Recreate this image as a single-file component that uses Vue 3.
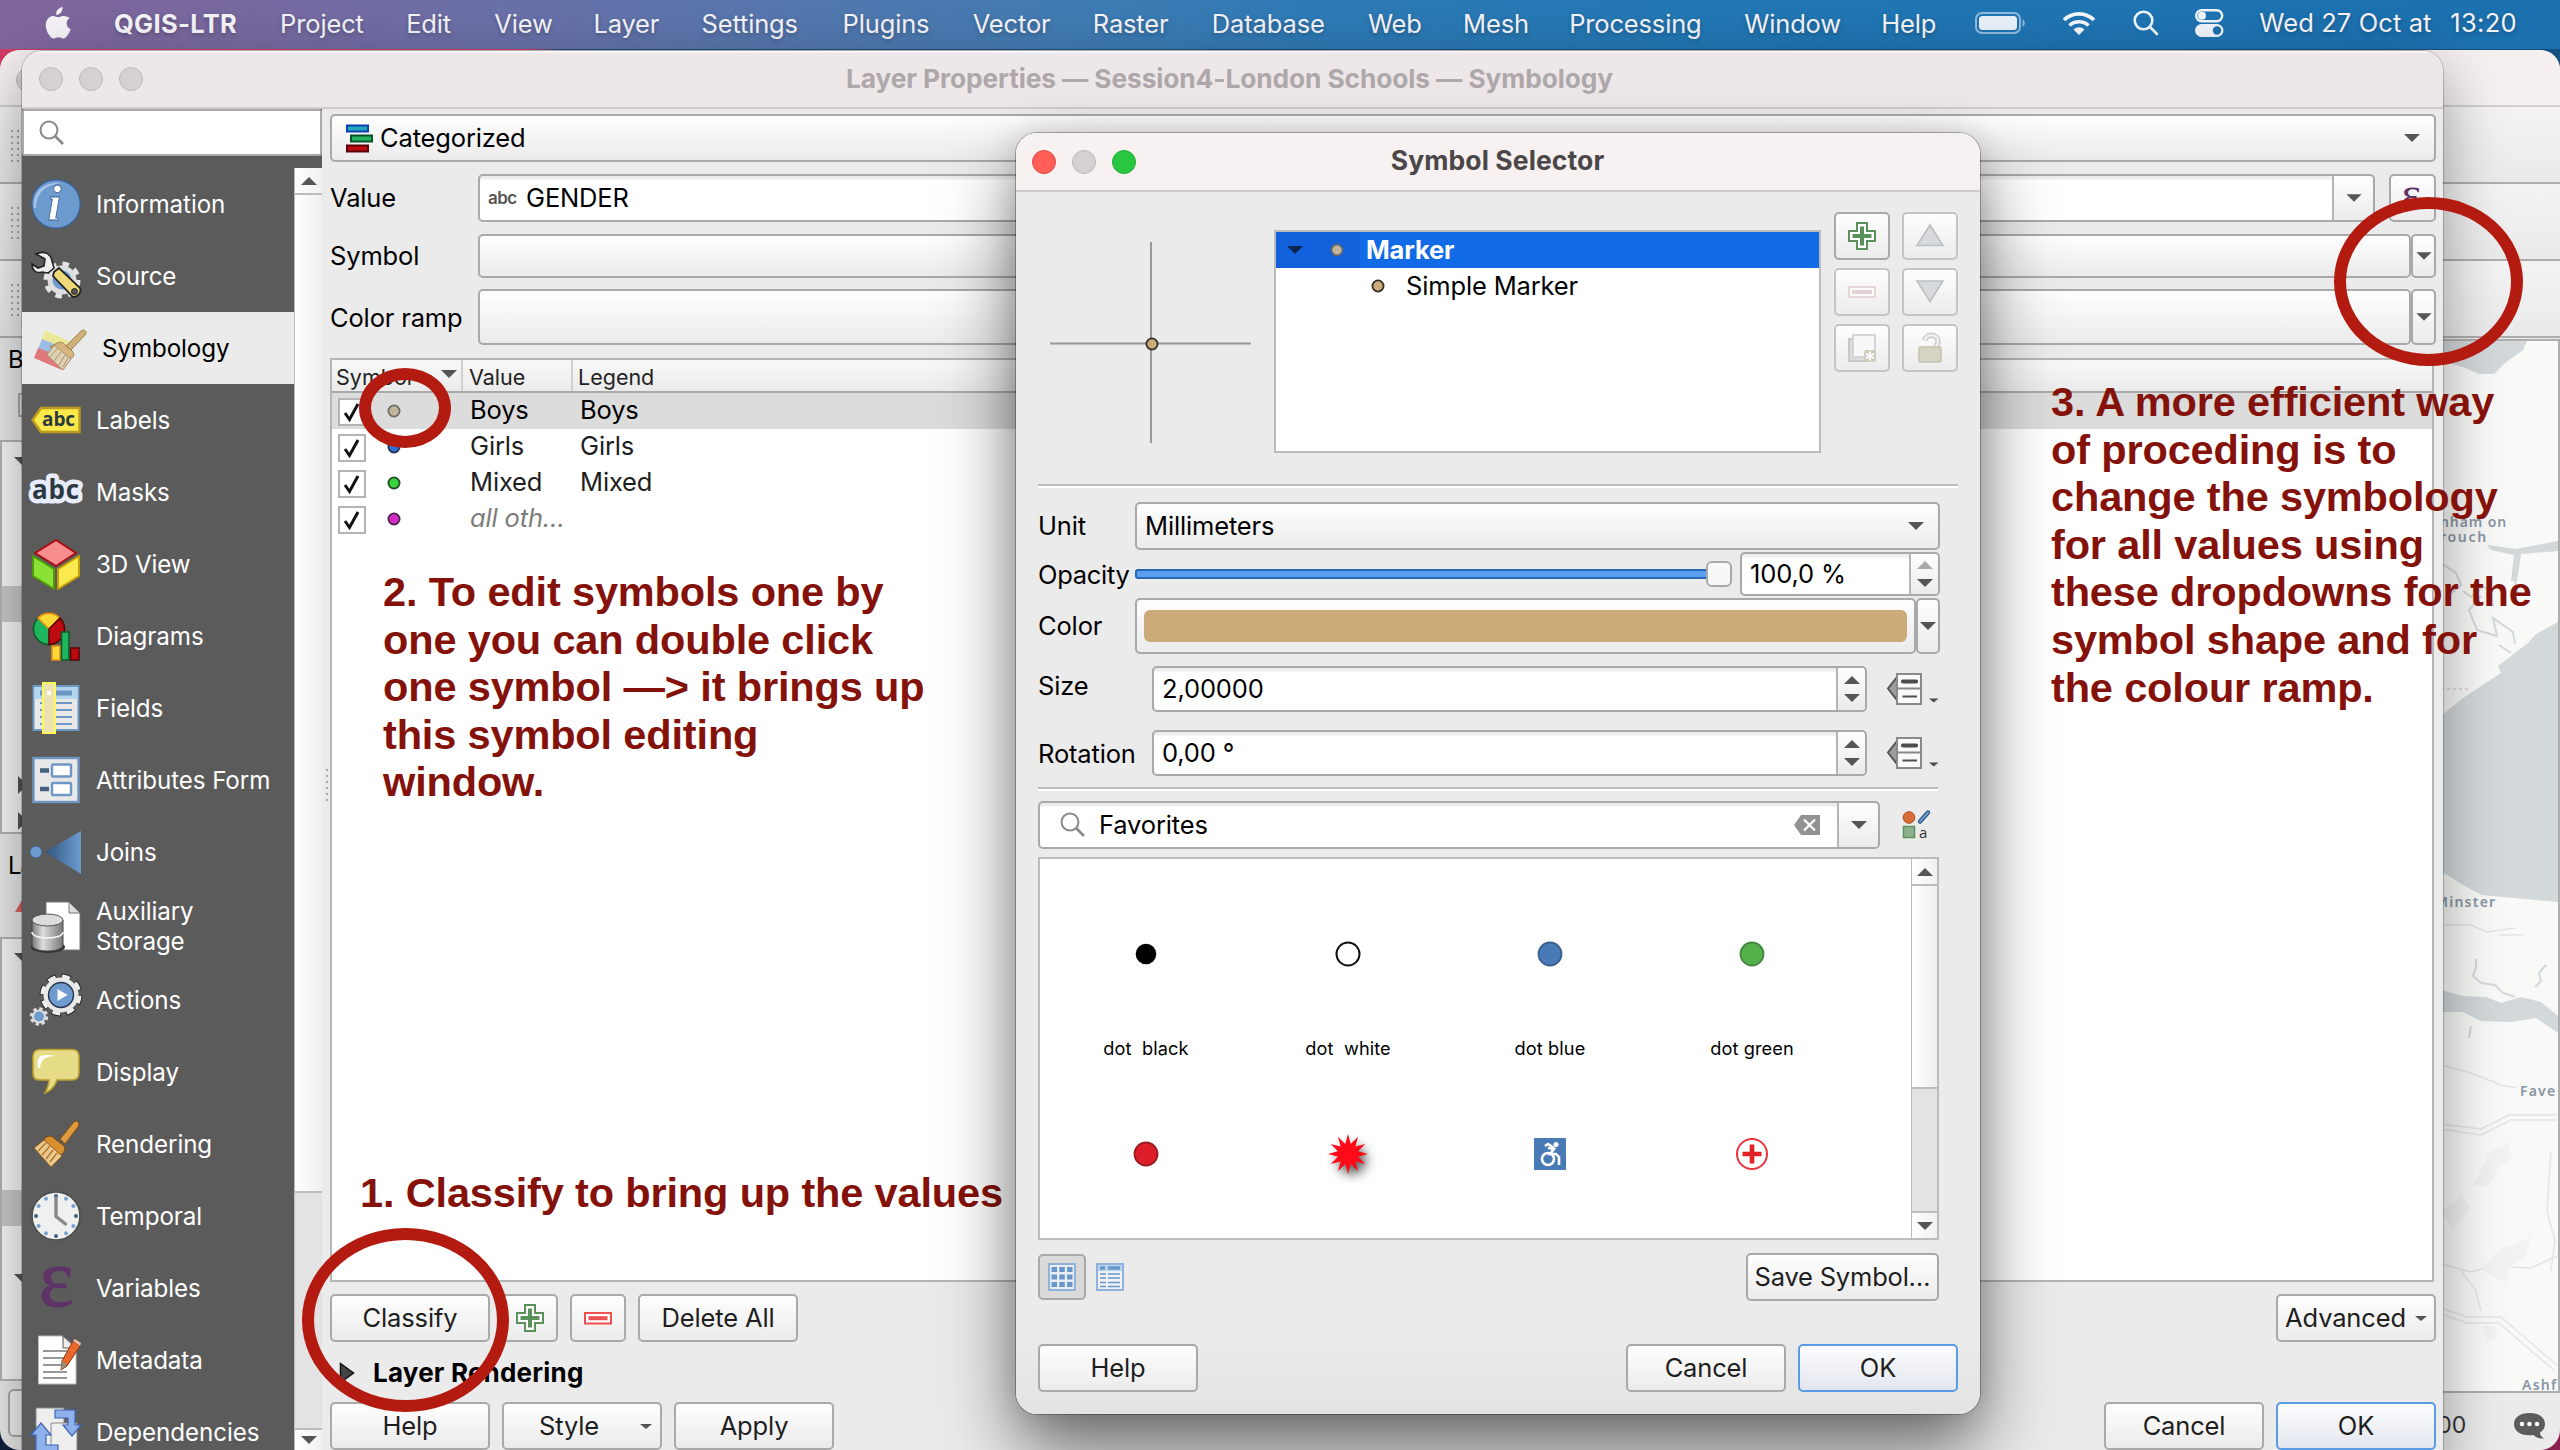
<script setup>
const menus = [
  { label: 'QGIS-LTR', w: 125, bold: true },
  { label: 'Project', w: 85 },
  { label: 'Edit', w: 47 },
  { label: 'View', w: 58 },
  { label: 'Layer', w: 67 },
  { label: 'Settings', w: 100 },
  { label: 'Plugins', w: 89 },
  { label: 'Vector', w: 79 },
  { label: 'Raster', w: 78 },
  { label: 'Database', w: 115 },
  { label: 'Web', w: 54 },
  { label: 'Mesh', w: 65 },
  { label: 'Processing', w: 134 },
  { label: 'Window', w: 96 },
  { label: 'Help', w: 56 },
]

const sections = [
  'Information', 'Source', 'Symbology', 'Labels', 'Masks', '3D View', 'Diagrams',
  'Fields', 'Attributes Form', 'Joins', 'Auxiliary Storage', 'Actions', 'Display',
  'Rendering', 'Temporal', 'Variables', 'Metadata', 'Dependencies',
]

const categories = [
  { value: 'Boys', legend: 'Boys', color: '#c2b59c', ring: '#6c6c66' },
  { value: 'Girls', legend: 'Girls', color: '#2e6fd8', ring: '#26344c' },
  { value: 'Mixed', legend: 'Mixed', color: '#35d43c', ring: '#264a28' },
  { value: 'all oth…', legend: '', color: '#d42ac6', ring: '#4a2448' },
]

const favorites = [
  { id: 'black', label: 'dot  black' },
  { id: 'white', label: 'dot  white' },
  { id: 'blue', label: 'dot blue' },
  { id: 'green', label: 'dot green' },
  { id: 'red' },
  { id: 'burst' },
  { id: 'access' },
  { id: 'cross' },
]

const starPoints = Array.from({ length: 24 }, (_, i) => {
  const r = i % 2 ? 10.5 : 20
  const a = (i * Math.PI) / 12 - Math.PI / 2
  return `${(30 + r * Math.cos(a)).toFixed(1)},${(30 + r * Math.sin(a)).toFixed(1)}`
}).join(' ')

const ticks = Array.from({ length: 12 }, (_, i) => {
  const a = (i * Math.PI) / 6
  return { x: 25 + 20 * Math.sin(a), y: 25 - 20 * Math.cos(a), main: i % 3 === 0 }
})
</script>

<template>
  <div class="desktop">
    <header class="menubar">
      <svg class="apple" width="27" height="32" viewBox="0 0 27 32"><path fill="#f4f2f7" d="M18.6 0c.3 2.4-.7 4.300-1.900 5.700-1.300 1.400-3 2.200-4.500 2-.3-2.200.7-4.100 1.900-5.400C15.300 1 17.200.1 18.600 0zM25.800 11.100c-2 1.200-3.200 3-3.100 5.400.1 2.800 1.700 4.800 4 5.800-.7 2.100-1.800 4.100-3.100 5.900-1.200 1.700-2.400 3.100-4.400 3.200-1.800 0-2.500-1.100-4.700-1.100s-2.900 1.100-4.700 1.100c-2 .1-3.400-1.700-4.700-3.500C2.400 24.100.4 17.800 2.900 13.200c1.300-2.600 3.700-4.100 6.200-4.200 2 0 3.700 1.300 5 1.300 1.200 0 3.300-1.600 5.800-1.300 2.300.1 4.400.9 5.900 2.100z"/></svg>
      <nav class="menus">
        <span v-for="m in menus" :key="m.label" :class="{ bold: m.bold }" :style="{ width: m.w + 'px' }">{{ m.label }}</span>
      </nav>
      <div class="status">
        <svg width="52" height="22" viewBox="0 0 52 22"><rect x="1" y="1" width="44" height="20" rx="6" fill="none" stroke="#8fbbdc" stroke-width="2"/><rect x="4" y="4" width="38" height="14" rx="3.500" fill="#e9f1f8"/><path d="M47.500 7.500c3 .8 3 6.200 0 7z" fill="#8fbbdc"/></svg>
        <svg class="wifi" width="34" height="25" viewBox="0 0 34 25"><g fill="none" stroke="#f1f6fa" stroke-width="3.600"><path d="M2 9a21.500 21.500 0 0 1 30 0"/><path d="M7.500 14.500a14 14 0 0 1 19 0"/></g><path fill="#f1f6fa" d="M11.500 18.500a8 8 0 0 1 11 0L17 24z"/></svg>
        <svg class="spot" width="26" height="26" viewBox="0 0 26 26"><g fill="none" stroke="#eef4fa" stroke-width="2.600" stroke-linecap="round"><circle cx="10.500" cy="10.500" r="8.800"/><path d="M17 17l7 7"/></g></svg>
        <svg class="cc" width="29" height="28" viewBox="0 0 29 28"><rect x="1.200" y="1.200" width="26" height="11" rx="5.500" fill="none" stroke="#eef4fa" stroke-width="2.400"/><circle cx="7" cy="6.700" r="4" fill="#eef4fa"/><rect y="15" width="28.500" height="13" rx="6.500" fill="#eef4fa"/><circle cx="22" cy="21.500" r="4.200" fill="#1d70ae"/></svg>
        <span class="date">Wed 27 Oct at</span><span class="time">13:20</span>
      </div>
    </header>

    <!-- QGIS main window -->
    <section class="main-window">
      <div class="mw-title"><i class="light off"></i></div>
      <div v-for="n in 3" :key="n" class="mw-tool"><i class="grip"></i></div>
      <div class="mw-body">
        <aside class="docks">
          <div class="dock-name">Browser</div>
          <i class="mini-box"></i>
          <div class="tree tree-a"><i class="dn"></i><i class="hl"></i><i class="rt"></i><i class="rt second"></i></div>
          <div class="dock-name layers">Layers</div>
          <i class="mini-tri"></i>
          <div class="tree tree-b"><i class="dn"></i><i class="hl"></i><i class="dn last"></i></div>
          <i class="dock-btn"></i>
        </aside>
        <svg class="map" width="119" height="1054" viewBox="0 0 117 1050">
          <rect width="117" height="1050" fill="#f9f9f7"/>
          <g fill="#d3d8db">
            <path d="M0 0H86L82 9 64 22 53 33H38L22 26 0 20z"/>
            <path d="M117 281L95 293 87 302 57 325 60 332 22 357 0 375V530L22 544 41 554 83 558 117 561z"/>
            <path d="M0 649L22 655 45 656 60 662 80 656 100 661 117 675V692L95 677 70 681 40 680 22 671 0 671z"/>
            <path d="M46 204L75 208 117 200V210L80 213 76 240H70L73 214 50 209z"/>
          </g>
          <g fill="none" stroke="#d3d8db" stroke-width="2">
            <path d="M35 618v8l-3 9 8 7 14 2 8 8 12 4M105 624l-7 8 2 8-6 6M30 685l-2 12M0 222l15 10 5 12-16 14M40 255l-12 14 8 20 20 6-4-18 20 14 2 12M22 250l8 6 12-10 8 2 2 18M74 240l3 14M58 304l12 8"/>
          </g>
          <g fill="none" stroke="#e4e5e3" stroke-width="1.500">
            <path d="M0 584h30l16 7 28-4M58 594h24M0 724l30 8 30 12 16 3M0 783l40 5 28-14h48M0 788l40 6 30-15h46M0 923l30 8 20-6 40 2 26-12M0 967l26 9h34l30 26 26 22M0 973l26 9h32l30 26 26 22M20 930l14 18 6 22M110 810l-4 60 8 30-4 30"/>
          </g>
          <path d="M0 348h28" stroke="#ead9de" stroke-width="2" stroke-dasharray="3 3"/>
          <g fill="#f1f3f0">
            <path d="M48 812l18-10 6 14-14 10-10 20-16-2zM60 908l30-12-6 20-14 8-6 18-24-14zM0 870l20-14 10 10-18 22zM42 985h12l2 10-10 6z"/>
          </g>
          <g fill="#8996a4" font-family="'Noto Sans', sans-serif" font-weight="600" font-size="14">
            <text x="-1" y="186" textLength="66">nham on</text><text x="-1" y="201" textLength="46">rouch</text>
            <text x="-4" y="535">s</text><text x="-6" y="566" textLength="60">Minster</text>
            <text x="79" y="755" textLength="35">Fave</text><text x="81" y="1049" textLength="34">Ashf</text>
          </g>
        </svg>
      </div>
      <footer class="mw-status"><span>00</span>
        <svg width="34" height="30" viewBox="0 0 34 30"><path fill="#5c5c5c" d="M16.500 2C26 2 32 6.500 32 13c0 4-2 6.600-5 8.500 0 2.500 1.500 4.500 4 6-4.500.3-8-1-10.500-3.600C9 25.500 1 21 1 13 1 6.500 7 2 16.500 2z"/><g fill="#fff"><circle cx="9" cy="13" r="2.300"/><circle cx="16.500" cy="13" r="2.300"/><circle cx="24" cy="13" r="2.300"/></g></svg>
      </footer>
    </section>

    <!-- Layer properties -->
    <section class="props">
      <div class="titlebar">
        <div class="lights"><i class="light off"></i><i class="light off"></i><i class="light off"></i></div>
        <h1>Layer Properties — Session4-London Schools — Symbology</h1>
      </div>
      <div class="props-body">
        <aside class="side">
          <div class="search"><svg width="26" height="26" viewBox="0 0 26 26"><g fill="none" stroke="#8a8a8a" stroke-width="2"><circle cx="10" cy="10" r="8.500"/><path d="M16 16l8 8" stroke-width="2.600"/></g></svg></div>
          <div class="side-main">
            <ul class="sections">
              <li v-for="s in sections" :key="s" :class="{ active: s === 'Symbology', tall: s === 'Auxiliary Storage' }">
                <svg class="ico" width="50" height="50" viewBox="0 0 50 50">
                  <g v-if="s === 'Information'">
                    <circle cx="25" cy="25" r="24.300" fill="#6d9bce" stroke="#3d5f96" stroke-width="1.400"/>
                    <path d="M3 29C1 12 14 2 31 4 14 6 6 13 5 29z" fill="#a5c3e6"/>
                    <text x="16.500" y="41" font-family="Liberation Serif, serif" font-weight="bold" font-style="italic" font-size="50" fill="#fff" stroke="#40609a" stroke-width=".8">i</text>
                  </g>
                  <g v-else-if="s === 'Source'">
                    <circle cx="31" cy="29" r="15.500" fill="none" stroke="#e4e4e4" stroke-width="6" stroke-dasharray="6.200 5.970"/>
                    <circle cx="31" cy="29" r="12" fill="#6d9bce" stroke="#dedede" stroke-width="5"/>
                    <path d="M23 21l5-4L49 37c2 4-2 9-7 9L22 25z" fill="#f0d979" stroke="#222" stroke-width="1.800"/>
                    <circle cx="43.500" cy="40.500" r="3" fill="#555" stroke="#222"/>
                    <path d="M5 3C13-1 20 3 21 10l2 7-6 5-6-1C5 23 1 19 1 13l6 4 6-2 1-7z" fill="#eef0ee" stroke="#222" stroke-width="1.600"/>
                  </g>
                  <g v-else-if="s === 'Symbology'" opacity=".85">
                    <path d="M10 7L38 20 34 30 6 18z" fill="#ebe88b"/><path d="M7 16L36 28 32 37 3 26z" fill="#8db4e4"/><path d="M3 25L32 36 27 47-1 35z" fill="#e0646c"/>
                    <path d="M46 8c3-3 7 1 4 4L36 27l-5-4z" fill="#cda867" stroke="#8f713c"/>
                    <path d="M22 20c4-2 7 0 9 3l5 4c4 3 3 6 1 8l-4 1-18-12z" fill="#d3ad6b" stroke="#8f713c"/>
                    <path d="M19 22l17 14-8 11-16-15z" fill="#dccdab" stroke="#9a8255"/><path d="M22 26l-7 8M26 29l-7 9M30 32l-6 10M33 35l-5 9" stroke="#9a8255"/>
                  </g>
                  <g v-else-if="s === 'Labels'">
                    <path d="M1.500 25L10 13H48.500V37H10z" fill="#fbe84a" stroke="#bd9b1c" stroke-width="2.400"/>
                    <text x="11" y="31" textLength="33" font-family="Open Sans, sans-serif" font-weight="bold" font-size="19" fill="#2b3a40">abc</text>
                  </g>
                  <g v-else-if="s === 'Masks'">
                    <text x="1" y="32" textLength="47" font-family="Open Sans, sans-serif" font-weight="bold" font-size="26" fill="#e9ecfb" stroke="#e9ecfb" stroke-width="9" stroke-linejoin="round">abc</text>
                    <text x="1" y="32" textLength="47" font-family="Open Sans, sans-serif" font-weight="bold" font-size="26" fill="#2b3a40">abc</text>
                  </g>
                  <g v-else-if="s === '3D View'" stroke-width="2" stroke-linejoin="round">
                    <path d="M25 1L45 14 25 27 4 14z" fill="#f78d8d" stroke="#ac0c10"/>
                    <path d="M2 17L23 30V50L2 37z" fill="#8ae234" stroke="#4f9a06"/><path d="M48 17L27 30V50L48 37z" fill="#fce94f" stroke="#c4a000"/>
                  </g>
                  <g v-else-if="s === 'Diagrams'" stroke-width="1.600">
                    <circle cx="18" cy="18" r="15.500" fill="#1fb55c" stroke="#0c5a2c"/><path d="M18 18L7 7a15.500 15.500 0 0 1 22 0z" fill="#ffd93a" stroke="#e8930c"/><path d="M18 18L29 7a15.500 15.500 0 0 1-11 26.500z" fill="#bd0a10" stroke="#5c0508"/>
                    <path d="M21 35h8v14h-8z" fill="#ffd93a" stroke="#e8930c"/><path d="M39.500 37H48v12h-8.500z" fill="#bd0a10" stroke="#5c0508"/><path d="M30.500 21H38v28h-7.500z" fill="#1fb55c" stroke="#0c5a2c"/>
                  </g>
                  <g v-else-if="s === 'Fields'">
                    <rect x="2.500" y="3" width="45" height="44" fill="#e8e8e8" stroke="#6d97c4" stroke-width="2"/><path d="M3.500 4h43v12h-43z" fill="#b5d5ee"/><path d="M9 10h32" stroke="#6d97c4" stroke-width="5"/><path d="M9 20h32M9 27h32M9 34h32M9 41h32" stroke="#6d97c4" stroke-width="2"/>
                    <rect x="12" y="0" width="12" height="50" fill="#ece3b0" stroke="#fdf859" stroke-width="2"/><path d="M16 8h4v4h-4z" fill="#fff"/>
                  </g>
                  <g v-else-if="s === 'Attributes Form'">
                    <rect x="2.500" y="3" width="45" height="44" fill="#e8e8e8" stroke="#6d97c4" stroke-width="2.400"/><path d="M9 15.500h9M9 34h9" stroke="#46607f" stroke-width="4.600"/><g fill="#fff" stroke="#6d97c4" stroke-width="2.400"><rect x="21" y="9.500" width="19" height="12" rx="1"/><rect x="21" y="28" width="19" height="12" rx="1"/></g>
                  </g>
                  <g v-else-if="s === 'Joins'">
                    <defs><linearGradient id="jg"><stop offset="0" stop-color="#2f5580"/><stop offset="1" stop-color="#6d9bce"/></linearGradient></defs>
                    <circle cx="5" cy="25" r="5.800" fill="#6d9bce" stroke="#466d9c"/><path d="M14 25L50 4V47z" fill="url(#jg)"/>
                  </g>
                  <g v-else-if="s === 'Auxiliary Storage'">
                    <defs><linearGradient id="cy"><stop offset="0" stop-color="#777"/><stop offset=".35" stop-color="#ddd"/><stop offset="1" stop-color="#777"/></linearGradient></defs>
                    <path d="M15 1H38L49 12V49H15z" fill="#fff" stroke="#777"/><path d="M38 1v11h11z" fill="#ddd" stroke="#777"/>
                    <ellipse cx="17" cy="46" rx="17" ry="6" fill="#333"/><path d="M1 19V44c0 8 31 8 31 0V19z" fill="url(#cy)" stroke="#444"/><ellipse cx="16.500" cy="19" rx="15.500" ry="6" fill="#dcdcdc" stroke="#555"/><path d="M1 31c0 8 31 8 31 0" fill="none" stroke="#f2f2f2" stroke-width="1.600"/>
                  </g>
                  <g v-else-if="s === 'Actions'">
                    <circle cx="30" cy="20" r="17" fill="none" stroke="#222" stroke-width="9" stroke-dasharray="8.400 4.950"/>
                    <circle cx="30" cy="20" r="17" fill="none" stroke="#eee" stroke-width="7" stroke-dasharray="7.200 6.150" stroke-dashoffset="-.6"/>
                    <circle cx="30" cy="20" r="15" fill="#6d9bce" stroke="#e8e8e8" stroke-width="5"/><circle cx="30" cy="20" r="12.500" fill="none" stroke="#25344a" stroke-width="1.400"/><path d="M26.500 14v12l10-6z" fill="#fff"/>
                    <circle cx="8" cy="41.500" r="7.500" fill="none" stroke="#ddd" stroke-width="3.500" stroke-dasharray="3.300 2.590"/><circle cx="8" cy="41.500" r="6" fill="#6d9bce" stroke="#ddd" stroke-width="2"/>
                  </g>
                  <g v-else-if="s === 'Display'">
                    <path d="M9 2.500H41c5 0 7 3 7 7V26c0 5-2 7-7 7H26c-2 6-7 11-12 13 2-4 4-9 4-13H9c-5 0-7-2-7-7V9.500c0-4 2-7 7-7z" fill="#e6dc87" stroke="#b99e2a" stroke-width="1.600"/><path d="M7 21C5 9 9 6 25 9 13 9 10 13 9 21z" fill="#fff"/>
                  </g>
                  <g v-else-if="s === 'Rendering'">
                    <path d="M42 4c3-4 8 0 5 4L34 25l-5-5z" fill="#de9a3c" stroke="#7c4d10"/><path d="M14 19c4-3 8-2 11 2l7 5c3 3 2 5 0 8l-4 4-16-15z" fill="#d98f2f" stroke="#7c4d10"/>
                    <path d="M13 21L31 37 20 48 3 29z" fill="#eec98c" stroke="#8a5a1a"/><path d="M15 24L7 32M19 27l-8 9M22 31l-7 9M26 34l-7 9" stroke="#a87430" stroke-width="1.300"/>
                  </g>
                  <g v-else-if="s === 'Temporal'">
                    <circle cx="25" cy="25" r="24" fill="#f0f0ee" stroke="#4c4c4c" stroke-width="1.600"/><circle v-for="(t, i) in ticks" :key="i" :cx="t.x" :cy="t.y" r="2" :fill="t.main ? '#46607f' : '#76a2d2'"/><path d="M25 7V25.500L34.500 33" fill="none" stroke="#888a85" stroke-width="3.400" stroke-linecap="round"/>
                  </g>
                  <g v-else-if="s === 'Variables'">
                    <text x="8" y="43" font-family="Liberation Serif, serif" font-size="82" fill="#5f3268" stroke="#5f3268">ε</text>
                  </g>
                  <g v-else-if="s === 'Metadata'">
                    <path d="M7.500 1H32L45 13V49H7.500z" fill="#fff" stroke="#bbb"/><path d="M32 1v12h13z" fill="#eee" stroke="#555"/><path d="M12 16H36M12 23H36M12 30H30M12 37H36M12 43H36" stroke="#777" stroke-width="1.400"/>
                    <path d="M42 6l7 5L36 31l-6 4 1-9z" fill="#e9692c" stroke="#8a3a10"/><path d="M30 35l1-9 5 4z" fill="#8f8f85"/><path d="M42 6l7 5 1-3-6-4z" fill="#e9b9a8"/>
                  </g>
                  <g v-else>
                    <path d="M5 1H33V50H5z" fill="#eee" stroke="#888"/><path d="M20 16H46V50H20z" fill="#eee" stroke="#888"/><path d="M24 3H44V18H50L41 29 32 18H37V11H24z" fill="#8fb2ec" stroke="#3d67b8" stroke-width="1.200"/><path d="M10 16L20 28H15V38H27V48H5V28H0z" fill="#8fb2ec" stroke="#3d67b8" stroke-width="1.200"/>
                  </g>
                </svg>
                <span>{{ s }}</span>
              </li>
            </ul>
            <div class="side-scroll"><div class="sb-btn"><i class="up"></i></div><div class="sb-track"></div><div class="sb-handle"></div><div class="sb-btn end"><i class="down"></i></div></div>
          </div>
        </aside>

        <div class="panel">
          <div class="combo renderer">
            <svg width="27" height="29" viewBox="0 0 27 29" stroke-width="2"><path d="M1 1.500h21v6H1z" fill="#1ea8b8" stroke="#0c3fb4"/><path d="M5 11.500h21v6H5z" fill="#22b45c" stroke="#0a5028"/><path d="M1 21.500h21v6H1z" fill="#bd0a10" stroke="#5c0508"/></svg>
            <span>Categorized</span><i class="down"></i>
          </div>
          <div class="row r-value"><label>Value</label>
            <div class="edit"><small>abc</small><span>GENDER</span><b class="drop"><i class="down"></i></b></div>
            <div class="btn eps">ε</div>
          </div>
          <div class="row r-symbol"><label>Symbol</label><div class="btn wide"></div><div class="btn arrow"><i class="down"></i></div></div>
          <div class="row r-ramp"><label>Color ramp</label><div class="btn wide"></div><div class="btn arrow"><i class="down"></i></div></div>
          <div class="table">
            <div class="thead"><span class="c1">Symbol<i class="down"></i></span><span class="c2">Value</span><span class="c3">Legend</span></div>
            <div v-for="(c, i) in categories" :key="c.value" class="trow" :class="{ sel: i === 0, other: i === 3 }">
              <svg class="check" width="28" height="28" viewBox="0 0 28 28"><rect x="1" y="1" width="26" height="26" fill="#fff" stroke="#b4b4b4" stroke-width="2"/><path d="M7 15l4.500 6.500L20 6" fill="none" stroke="#111" stroke-width="3"/></svg>
              <svg class="dot" width="16" height="16" viewBox="0 0 16 16"><circle cx="8" cy="8" r="5.600" :fill="c.color" :stroke="c.ring" stroke-width="1.800"/></svg>
              <span class="v">{{ c.value }}</span><span>{{ c.legend }}</span>
            </div>
          </div>
          <div class="actions">
            <div class="btn b160">Classify</div>
            <div class="btn sq add"><svg width="28" height="28" viewBox="0 0 28 28"><path d="M9 1h10v8h8v10h-8v8H9v-8H1V9h8z" fill="#fff" stroke="#5a905a" stroke-width="2"/><path d="M14 4.500v19M4.500 14h19" stroke="#5a905a" stroke-width="4"/></svg></div>
            <div class="btn sq rem"><svg width="28" height="28" viewBox="0 0 28 28"><path d="M1 9h26v10.500H1z" fill="#fff" stroke="#ee4f4f" stroke-width="2"/><path d="M4.500 14.200h19" stroke="#ee4f4f" stroke-width="4"/></svg></div>
            <div class="btn b160">Delete All</div>
            <div class="btn b160 adv">Advanced<i class="down s"></i></div>
          </div>
          <div class="rendering"><svg width="16" height="22" viewBox="0 0 16 22"><path d="M1.500 1.500L14.500 11 1.500 20.500z" fill="#444" stroke="#111" stroke-width="1.500"/></svg>Layer Rendering</div>
          <div class="footer">
            <div class="btn b160">Help</div><div class="btn b160 style">Style<i class="down s"></i></div><div class="btn b160">Apply</div>
            <div class="btn b160 push">Cancel</div><div class="btn b160 primary">OK</div>
          </div>
        </div>
      </div>
    </section>
    <i class="splitter"></i>

    <p class="note n1">1. Classify to bring up the values</p>

    <!-- Symbol selector -->
    <section class="selector">
      <div class="titlebar">
        <div class="lights"><i class="light red"></i><i class="light off"></i><i class="light green"></i></div>
        <h1>Symbol Selector</h1>
      </div>
      <div class="sel-body">
        <div class="top">
          <svg class="preview" width="202" height="202" viewBox="0 0 202 202"><path d="M101 0V201" stroke="#98989d" stroke-width="2"/><path d="M0 101.500H201" stroke="#98989d" stroke-width="2"/><circle cx="102" cy="102" r="5.600" fill="#cdab78" stroke="#33302c" stroke-width="1.800"/></svg>
          <div class="symtree">
            <div class="node on"><i class="down"></i><svg width="16" height="16" viewBox="0 0 16 16"><circle cx="8" cy="8" r="5.500" fill="#c2b59c" stroke="#60676e" stroke-width="1.800"/></svg><span>Marker</span></div>
            <div class="node leaf"><svg width="16" height="16" viewBox="0 0 16 16"><circle cx="8" cy="8" r="5.600" fill="#cdab78" stroke="#33302c" stroke-width="1.800"/></svg><span>Simple Marker</span></div>
          </div>
          <div class="symbtns">
            <div class="btn"><svg width="28" height="28" viewBox="0 0 28 28"><path d="M9 1h10v8h8v10h-8v8H9v-8H1V9h8z" fill="#fff" stroke="#5a905a" stroke-width="2"/><path d="M14 4.500v19M4.500 14h19" stroke="#5a905a" stroke-width="4"/></svg></div>
            <div class="btn dis"><svg width="28" height="28" viewBox="0 0 28 28"><path d="M14 3L27 23.500H1z" fill="#d6dadd" stroke="#bcc0c3" stroke-width="1.600"/></svg></div>
            <div class="btn dis"><svg width="28" height="28" viewBox="0 0 28 28"><path d="M1 9h26v10H1z" fill="#fdfafa" stroke="#e2d6d6" stroke-width="2"/><path d="M4 14h20" stroke="#e0d3d3" stroke-width="4"/></svg></div>
            <div class="btn dis"><svg width="28" height="28" viewBox="0 0 28 28"><path d="M14 23.500L27 3H1z" fill="#d6dadd" stroke="#bcc0c3" stroke-width="1.600"/></svg></div>
            <div class="btn dis"><svg width="28" height="28" viewBox="0 0 28 28"><path d="M1 5h22v22H1z" fill="#dcdcdc" stroke="#c8c8c8" stroke-width="2"/><path d="M5 1h22v22H5z" fill="#f8f8f8" stroke="#d4d4d4" stroke-width="2"/><rect x="16" y="16" width="12" height="12" rx="2.500" fill="#cfccc0"/><path d="M22 17.500v9M18 19.700l8 4.600M26 19.700l-8 4.600" stroke="#fff" stroke-width="1.700"/></svg></div>
            <div class="btn dis"><svg width="28" height="32" viewBox="0 0 28 32"><path d="M8.500 8.500C10 2 21 1 22 9c.2 3-1 4-2 6" fill="none" stroke="#cacaca" stroke-width="5.500"/><path d="M8.500 8.500C10 2 21 1 22 9c.2 3-1 4-2 6" fill="none" stroke="#f0f0f0" stroke-width="2.500"/><rect x="3" y="15" width="22" height="15" rx="2" fill="#d6d3c4" stroke="#c6c2b0" stroke-width="1.600"/></svg></div>
          </div>
        </div>
        <hr class="hr1">
        <div class="srow s-unit"><label>Unit</label><div class="combo"><span>Millimeters</span><i class="down"></i></div></div>
        <div class="srow s-op"><label>Opacity</label><div class="slider"><i class="rail"></i><i class="knob"></i></div>
          <div class="spin"><span>100,0 %</span><b><i class="up dim"></i><i class="down"></i></b></div></div>
        <div class="srow s-col"><label>Color</label><div class="btn color"><i></i></div><div class="btn arrow"><i class="down"></i></div></div>
        <div v-for="f in [['Size', '2,00000'], ['Rotation', '0,00 °']]" :key="f[0]" class="srow s-num" :class="f[0].toLowerCase()">
          <label>{{ f[0] }}</label><div class="spin"><span>{{ f[1] }}</span><b><i class="up"></i><i class="down"></i></b></div>
          <svg class="dd" width="54" height="32" viewBox="0 0 54 32"><path d="M11 4L2 15.500 11 27z" fill="#9b9da1" stroke="#555" stroke-width="2"/><rect x="11" y="1" width="24" height="30" fill="#fafafa" stroke="#888a85" stroke-width="2"/><path d="M11 15.500h24" stroke="#888a85" stroke-width="2"/><path d="M17 8.500h13" stroke="#4d4d4d" stroke-width="4.200" stroke-linecap="round"/><path d="M16.500 23.500H31" stroke="#4d4d4d" stroke-width="2"/><path d="M43 25.500h9.500l-4.700 4z" fill="#4d4d4d"/></svg>
        </div>
        <hr class="hr2">
        <div class="fav">
          <div class="edit"><svg width="26" height="26" viewBox="0 0 26 26"><g fill="none" stroke="#8a8a8a" stroke-width="2"><circle cx="10" cy="10" r="8.500"/><path d="M16 16l8 8" stroke-width="2.600"/></g></svg><span>Favorites</span>
            <svg class="clr" width="26" height="20" viewBox="0 0 26 20"><path d="M7 0H26V20H7L0 10z" fill="#929292"/><path d="M10 4.500l11 11M21 4.500l-11 11" stroke="#fff" stroke-width="2.200"/></svg>
            <b class="drop"><i class="down"></i></b></div>
          <svg width="28" height="28" viewBox="0 0 28 28"><circle cx="7" cy="6.500" r="5.800" fill="#d96c34" stroke="#a34a1a"/><path d="M18 10.500l8-9" stroke="#2e5586" stroke-width="4.400" stroke-linecap="round"/><path d="M18 10.500l8-9" stroke="#6d9bce" stroke-width="2" stroke-linecap="round"/><rect x="1.500" y="15.500" width="11" height="11" fill="#8fb08c" stroke="#5a905a" stroke-width="1.500"/><text x="17" y="26.500" font-family="Open Sans, sans-serif" font-size="15" fill="#333">a</text></svg>
        </div>
        <div class="gallery">
          <div class="cells">
            <figure v-for="f in favorites" :key="f.id">
              <svg width="60" height="60" viewBox="0 0 60 60">
                <circle v-if="f.id === 'black'" cx="30" cy="30" r="10.300" fill="#000"/>
                <circle v-else-if="f.id === 'white'" cx="30" cy="30" r="11.500" fill="#fff" stroke="#111" stroke-width="2"/>
                <circle v-else-if="f.id === 'blue'" cx="30" cy="30" r="11.500" fill="#487bb6" stroke="#38608f" stroke-width="1.800"/>
                <circle v-else-if="f.id === 'green'" cx="30" cy="30" r="11.500" fill="#54b04a" stroke="#42883a" stroke-width="1.800"/>
                <circle v-else-if="f.id === 'red'" cx="30" cy="30" r="11.500" fill="#db1e2a" stroke="#9a1a20" stroke-width="1.800"/>
                <g v-else-if="f.id === 'burst'" class="burst"><polygon :points="starPoints" fill="#ff0a18"/></g>
                <g v-else-if="f.id === 'access'"><rect x="14" y="14" width="32" height="32" fill="#487bb6"/><g fill="none" stroke="#fff" stroke-width="2.600"><path d="M28 24l6 1-4 5h6l3 3v8"/><path d="M25 22l3-2 6 4"/><circle cx="28" cy="35" r="6"/></g><circle cx="36" cy="20.500" r="2.500" fill="#fff"/></g>
                <g v-else><circle cx="30" cy="30" r="15" fill="#fff" stroke="#e8343c" stroke-width="2"/><path d="M30 20.500v19M20.500 30h19" stroke="#e31f28" stroke-width="4.600"/></g>
              </svg>
              <figcaption>{{ f.label }}</figcaption>
            </figure>
          </div>
          <div class="gal-scroll"><div class="sb-btn"><i class="up"></i></div><div class="sb-track"></div><div class="sb-handle"></div><div class="sb-btn end"><i class="down"></i></div></div>
        </div>
        <div class="views">
          <div class="btn pressed"><svg width="28" height="28" viewBox="0 0 28 28"><rect x="1" y="1" width="26" height="26" fill="#e8eef4" stroke="#8fb3d8" stroke-width="2"/><path d="M3.500 6.500h21M3.500 14h21M3.500 21.500h21" stroke="#6796c8" stroke-width="5" stroke-dasharray="5.500 2.300"/></svg></div>
          <svg width="28" height="28" viewBox="0 0 28 28"><rect x="1" y="1" width="26" height="26" fill="#eef2f6" stroke="#8fb3d8" stroke-width="2"/><path d="M2 2h24v6H2z" fill="#b5d5ee"/><path d="M4 5h5M12 5h12" stroke="#6796c8" stroke-width="3.500"/><path d="M4 11h6M12 11h12M4 15h6M12 15h12M4 19.500h6M12 19.500h12M4 23.500h6M12 23.500h12" stroke="#6796c8" stroke-width="1.600"/></svg>
          <div class="btn save">Save Symbol…</div>
        </div>
        <div class="sel-foot"><div class="btn b160">Help</div><div class="btn b160 push">Cancel</div><div class="btn b160 primary">OK</div></div>
      </div>
    </section>

    <p class="note n2">2. To edit symbols one by<br>one you can double click<br>one symbol —&gt; it brings up<br>this symbol editing<br>window.</p>
    <p class="note n3">3. A more efficient way<br>of proceding is to<br>change the symbology<br>for all values using<br>these dropdowns for the<br>symbol shape and for<br>the colour ramp.</p>
    <i class="ring ra"></i><i class="ring rb"></i><i class="ring rc"></i>
  </div>
</template>

<style>
body { margin: 0; overflow: hidden; }
</style>

<style scoped>
* { box-sizing: border-box; }
.desktop {
  position: relative; width: 2560px; height: 1450px; overflow: hidden;
  font: 25.500px/1.2 Inter, sans-serif; letter-spacing: -0.150px; color: #000;
  background: linear-gradient(90deg, #d03a63 0 530px, #14517f 560px) top/100% 120px no-repeat, linear-gradient(90deg, #12203f 50%, #8a1f4f);
}
svg { display: block; flex: none; overflow: visible; }
i { display: block; flex: none; }
.menubar {
  height: 49px; display: flex; align-items: center; padding-left: 44px; color: #f4f3f8; white-space: nowrap;
  background: linear-gradient(90deg, #80669b 0, #7769a0 250px, #6a70a8 500px, #5577ae 780px, #447bb2 1020px, #2f7ab5 1300px, #2277b4 1700px, #1b70af 2560px);
  text-shadow: 0 2px 4px rgba(0,0,0,.25);
}
.apple { margin-top: -4px; }
.menus { display: flex; gap: 41.100px; margin: -1px 0 0 43px; }
.menus span { flex: none; }
.menus .bold { font-weight: 700; letter-spacing: .3px; }
.status { display: flex; align-items: center; margin-left: 38px; }
.status svg { margin-top: -3px; }
.status svg:first-child { margin-top: -4px; }
.wifi { margin-left: 35px; }
.spot { margin-left: 37px; }
.cc { margin-left: 36px; }
.date { margin-left: 35px; width: 175px; letter-spacing: .1px; margin-top: -2px; }
.time { margin-left: 16px; letter-spacing: .3px; margin-top: -2px; }

.up, .down { width: 0; height: 0; border: 8px solid transparent; border-top: 8px solid #555; border-bottom: 0; }
.up { border-top: 0; border-bottom: 8px solid #555; }
.up.dim { border-bottom-color: #aaa; }
.down.s { border-width: 5.500px 6px 0; }

.main-window { position: absolute; left: 0; top: 50px; width: 2560px; height: 1400px; background: #ebebeb; border-radius: 20px; overflow: hidden; display: flex; flex-direction: column; }
.mw-title { height: 57px; background: #f5eff2; border-bottom: 2px solid #d3cdcf; padding: 18px 0 0 16px; flex: none; }
.mw-tool { height: 77px; border-bottom: 2px solid #aeaeae; background: linear-gradient(#f3f3f3, #eaeaea); padding: 21px 0 0 9px; flex: none; }
.grip { width: 10px; height: 34px; background: radial-gradient(circle, #aaa 1.300px, transparent 1.600px) 0 0/6px 6px; }
.mw-body { display: flex; justify-content: space-between; height: 1055px; }
.docks { width: 100px; font-size: 24px; letter-spacing: -1px; }
.dock-name { padding-left: 8px; height: 40px; margin-top: 4px; line-height: 36px; }
.mini-box { width: 24px; height: 24px; border: 2px solid #aaa; margin-left: 18px; margin-top: 11px; }
.tree { border: 2px solid #b5b5b5; background: #fafafa; height: 394px; margin-top: 23px; overflow: hidden; padding-left: 12px; }
.tree .dn { border: 9px solid transparent; border-top: 9px solid #555; border-bottom: 0; margin-top: 15px; }
.tree .rt { border: 9px solid transparent; border-left: 9px solid #555; border-right: 0; margin: 154px 0 0 4px; }
.tree .rt.second { margin-top: 18px; }
.tree .hl { height: 36px; background: #ccc; margin: 120px 0 0 -12px; }
.dock-name.layers { margin-top: 14px; }
.mini-tri { border: 7px solid transparent; border-bottom: 12px solid #d66; border-top: 0; margin: 12px 0 0 15px; }
.tree-b { height: 444px; margin-top: 25px; }
.tree-b .dn { margin-top: 14px; }
.tree-b .hl { margin-top: 228px; }
.tree-b .dn.last { margin-top: 48px; }
.dock-btn { width: 60px; height: 48px; border: 2px solid #aaa; border-radius: 6px; margin: 8px 0 0 8px; background: #f4f4f4; }
.map { border: solid #aeaeae; border-width: 2px 2px 2px 0; margin-top: 1px; }
.mw-status { height: 57px; display: flex; align-items: center; justify-content: flex-end; font-size: 23px; color: #333; padding: 9px 13px 0 0; gap: 47px; }

.titlebar { display: flex; height: 58px; flex: none; align-items: center; border-bottom: 2px solid #cfcacb; }
.lights { display: flex; gap: 16px; width: 0; }
.light { width: 24px; height: 24px; border-radius: 50%; background: #d5d0d2; border: 1.500px solid #bdb8ba; }
.light.red { background: #ff5f57; border-color: #e2463f; }
.light.green { background: #29c740; border-color: #1fab30; }
h1 { margin: -1px 0 0; font-size: 26.500px; font-weight: 700; flex: 1; text-align: center; white-space: nowrap; }

.props { position: absolute; left: 22px; top: 51px; width: 2421px; height: 1420px; border-radius: 20px; background: #ebebeb; box-shadow: 0 0 0 1px rgba(0,0,0,.2), 0 20px 60px rgba(0,0,0,.38); overflow: hidden; }
.props .titlebar { background: #eee7e9; padding-left: 17px; box-shadow: inset 0 2px 0 #f8f4f5; }
.props h1 { color: #aea8aa; padding-right: 23px; letter-spacing: -.1px; font-size: 26.300px; }
.props-body { display: flex; height: 1362px; }
.side { width: 300px; background: #5b5b5b; flex: none; display: flex; flex-direction: column; }
.search { height: 47px; background: #fff; border: 2px solid #a9a9a9; border-radius: 3px; padding: 9px 0 0 15px; }
.side-main { display: flex; flex: 1; padding-top: 12px; min-height: 0; }
.sections { list-style: none; margin: 0; padding: 0; width: 272px; color: #fff; font-size: 24.200px; letter-spacing: -.1px; height: 1300px; overflow: hidden; }
.sections li { height: 72px; display: flex; align-items: center; padding-left: 9px; gap: 15px; }
.sections li span { padding-top: 1px; white-space: nowrap; }
.sections li.tall { height: 76px; line-height: 30px; }
.sections li.tall span { width: 110px; white-space: normal; }
.sections li.active { background: #ebebeb; color: #000; padding-left: 13px; gap: 17px; }
.side-scroll { width: 28px; height: 1282px; border-left: 1px solid #bbb; background: #f4f4f4; display: flex; flex-direction: column; }
.side-scroll .sb-btn.end { height: 22px; }
.sb-btn { height: 27px; background: linear-gradient(90deg, #fff, #f1f1f1); border-bottom: 2px solid #bdbdbd; display: flex; justify-content: center; align-items: center; flex: none; }
.sb-btn.end { border: 0; border-top: 2px solid #bdbdbd; }
.sb-track { flex: 1; background: linear-gradient(90deg, #fff, #efefef); }
.sb-handle { height: 237px; background: #e3e3e3; border-top: 2px solid #bdbdbd; flex: none; }

.panel { width: 2106px; margin-left: 8px; display: flex; flex-direction: column; padding-top: 5px; }
.combo, .btn, .edit, .spin { border: 2px solid #a9a9a9; border-radius: 5px; background: linear-gradient(#fefefe, #ebebeb); display: flex; align-items: center; flex: none; }
.combo { padding: 0 14px; }
.combo span, .edit span, .spin span, .srow label, .row label { padding-top: 1px; }
.combo .down { margin-left: auto; }
.btn { justify-content: center; color: #1e1e1e; }
.edit, .spin { background: linear-gradient(#ededed 0 3px, #fff 4px); }
.edit b, .spin b { align-self: stretch; border-left: 2px solid #b5b5b5; margin-left: auto; display: flex; align-items: center; justify-content: center; background: linear-gradient(#fefefe, #ebebeb); border-radius: 0 4px 4px 0; }
.spin b { flex-direction: column; gap: 10px; width: 29px; }
.edit b { width: 41px; }
.renderer { height: 48px; gap: 7px; }
.row { display: flex; align-items: center; }
.row label { width: 148px; flex: none; }
.r-value { height: 48px; margin-top: 12px; }
.r-value .edit { width: 1897px; height: 48px; padding-left: 8px; gap: 10px; }
.edit small { font-size: 17px; font-weight: 600; color: #555; width: 28px; letter-spacing: -.5px; }
.eps { width: 47px; height: 48px; margin-left: 14px; color: #5f3268; font: 46px/30px 'Liberation Serif', serif; padding: 0 3px 8px 0; }
.r-symbol { height: 44px; margin-top: 12px; }
.r-ramp { height: 56px; margin-top: 11px; }
.r-ramp label { padding-top: 3px; }
.row .wide { width: 1933px; height: 100%; }
.row .arrow { width: 25px; height: 100%; }
.row .down { transform: scale(.95); }
.table { border: 2px solid #b5b5b5; background: #fff; height: 924px; margin-top: 13px; width: 2104px; }
.thead { height: 33px; display: flex; border-bottom: 2px solid #a9a9a9; background: linear-gradient(#f8f8f8, #ebebeb); font-size: 21.500px; letter-spacing: 0; color: #222; line-height: 34px; }
.thead .c1 { width: 131px; padding-left: 4px; display: flex; justify-content: space-between; border-right: 2px solid #cfcfcf; padding-right: 4px; }
.thead .down { margin-top: 10px; }
.thead .c2 { width: 110px; padding-left: 6px; border-right: 2px solid #cfcfcf; }
.thead .c3 { padding-left: 5px; }
.trow { height: 36px; display: flex; align-items: center; color: #1e1e1e; line-height: 32px; }
.trow span { margin-top: -2px; }
.trow.sel { background: #dcdcdc; color: #000; }
.trow.other { color: #7c7c7c; font-style: italic; }
.check { margin: 1px 0 0 6px; }
.dot { margin-left: 20px; }
.trow .v { width: 110px; margin-left: 68px; white-space: nowrap; }
.actions { display: flex; margin-top: 12px; height: 48px; }
.actions .btn, .footer .btn, .sel-foot .btn { height: 48px; }
.b160 { width: 160px; padding-top: 1px; }
.sq.add { width: 57px; margin-left: 11px; }
.sq.rem { width: 56px; margin: 0 12px 0 12px; }
.adv { margin-left: auto; gap: 9px; }
.rendering { display: flex; align-items: center; font-weight: 700; height: 60px; gap: 18px; padding: 1px 0 0 9px; letter-spacing: .2px; font-size: 26px; }
.footer { display: flex; gap: 12px; }
.push { margin-left: auto; }
.style { gap: 41px; justify-content: flex-start; padding-left: 35px; }
.primary { border-color: #5a9be6; background: linear-gradient(#fdfdfe, #e2e6ee); }
.splitter { position: absolute; left: 325px; top: 767px; width: 4px; height: 36px; background: radial-gradient(circle, #aaa 1.300px, transparent 1.600px) 0 0/4px 6px; }

.selector { position: absolute; left: 1016px; top: 133px; width: 964px; height: 1281px; border-radius: 21px; background: linear-gradient(#ebebeb 94%, #e3e3e3); box-shadow: 0 0 0 1px rgba(0,0,0,.28), 0 36px 75px rgba(0,0,0,.55), 0 0 30px rgba(0,0,0,.12); overflow: hidden; }
.selector .titlebar { background: #f7f1f2; padding-left: 16px; height: 59px; }
.selector h1 { color: #4b4748; padding-right: 17px; letter-spacing: .1px; margin-top: -2px; }
.sel-body { padding: 20px 22px 0; display: flex; flex-direction: column; }
.top { display: flex; height: 272px; }
.preview { margin: 30px 0 0 12px; }
.symtree { margin: 18px 0 0 22px; width: 547px; height: 223px; border: 2px solid #bcbcbc; background: #fff; }
.node { height: 36px; display: flex; align-items: center; white-space: nowrap; }
.node.on { background: linear-gradient(90deg, #1160dc 84px, #116ae6 84px); color: #fff; font-weight: 700; padding-left: 11px; }
.node.on .down { border-top-color: #0b2550; }
.node.on svg { margin: 0 21px 0 26px; }
.node.leaf svg { margin: 0 20px 0 94px; }
.symbtns { display: grid; grid-template-columns: 56px 56px; gap: 8px 12px; margin-left: 13px; height: 160px; grid-auto-rows: 48px; }
.dis { border-color: #c4c4c4; }
hr { border: 0; margin: 0; height: 4px; background: linear-gradient(#bcbcbc 50%, #fff 50%); flex: none; }
.hr1 { width: 920px; }
.hr2 { width: 900px; }
.srow { display: flex; align-items: center; }
.srow label { width: 97px; flex: none; white-space: nowrap; }
.s-unit { margin-top: 14px; height: 48px; }
.s-unit .combo { width: 805px; height: 48px; padding-left: 8px; }
.s-op { height: 44px; margin-top: 2px; }
.s-op label { padding-top: 2px; letter-spacing: -.3px; }
.slider { display: flex; align-items: center; width: 597px; margin-right: 8px; }
.rail { flex: 1; height: 10px; border: 2px solid #2767b4; border-radius: 3px; background: #5b9ff0; margin-right: -2px; }
.knob { width: 26px; height: 26px; border: 2px solid #a9a9a9; border-radius: 6px; background: #f8f8f8; }
.spin { padding-left: 8px; }
.s-op .spin { width: 200px; height: 44px; }
.s-col { margin-top: 2px; height: 56px; }
.color { width: 781px; height: 56px; padding: 10px 7px; }
.color i { width: 763px; height: 32px; border-radius: 6px; background: #cdab78; }
.s-col .arrow { width: 24px; height: 56px; }
.s-num { height: 46px; margin-top: 12px; }
.s-num.rotation { margin-top: 18px; }
.s-num label { width: 114px; }
.s-num .spin { width: 715px; height: 46px; }
.s-num.size label { margin-top: -6px; }
.s-num.rotation label { padding-top: 3px; }
.dd { margin-left: 19px; }
.hr2 { margin-top: 11px; }
.fav { display: flex; align-items: center; height: 48px; margin-top: 10px; }
.fav .edit { width: 842px; height: 48px; margin-right: 22px; padding-left: 20px; gap: 13px; }
.fav .clr { margin-left: auto; }
.fav .edit b { margin-left: 4px; }
.gallery { width: 901px; height: 383px; margin-top: 8px; border: 2px solid #bcbcbc; background: #fff; display: flex; overflow: hidden; }
.cells { width: 871px; display: grid; grid-template-columns: repeat(4, 202px); grid-auto-rows: 200px; padding: 65px 0 0 5px; flex: none; }
figure { margin: 0; display: flex; flex-direction: column; align-items: center; }
figcaption { font-size: 18.200px; margin-top: 54px; white-space: pre; letter-spacing: .1px; }
.burst { filter: drop-shadow(4px 6px 5px rgba(0,0,0,.6)); }
.gal-scroll { flex: 1; border-left: 1px solid #bbb; display: flex; flex-direction: column; }
.gal-scroll .sb-handle { height: 124px; }
.views { display: flex; align-items: center; margin-top: 13px; height: 48px; width: 901px; }
.views .btn { height: 46px; }
.pressed { width: 48px; background: #dadada; margin-right: 10px; }
.views .save { margin-left: auto; width: 193px; height: 48px; padding-top: 1px; letter-spacing: -.2px; white-space: nowrap; }
.sel-foot { display: flex; gap: 12px; margin-top: 43px; width: 920px; }

.note { position: absolute; margin: 0; font: bold 41.500px/47.600px 'Liberation Sans', Arial, sans-serif; letter-spacing: -.15px; color: #84120a; white-space: nowrap; }
.n1 { left: 360px; top: 1169px; }
.n2 { left: 383px; top: 568px; }
.n3 { left: 2051px; top: 378px; }
.ring { position: absolute; border: 12px solid #b31b10; border-radius: 50%; }
.ra { left: 302px; top: 1228px; width: 207px; height: 184px; }
.rb { left: 359px; top: 368px; width: 92px; height: 80px; }
.rc { left: 2334px; top: 197px; width: 189px; height: 169px; }
</style>
